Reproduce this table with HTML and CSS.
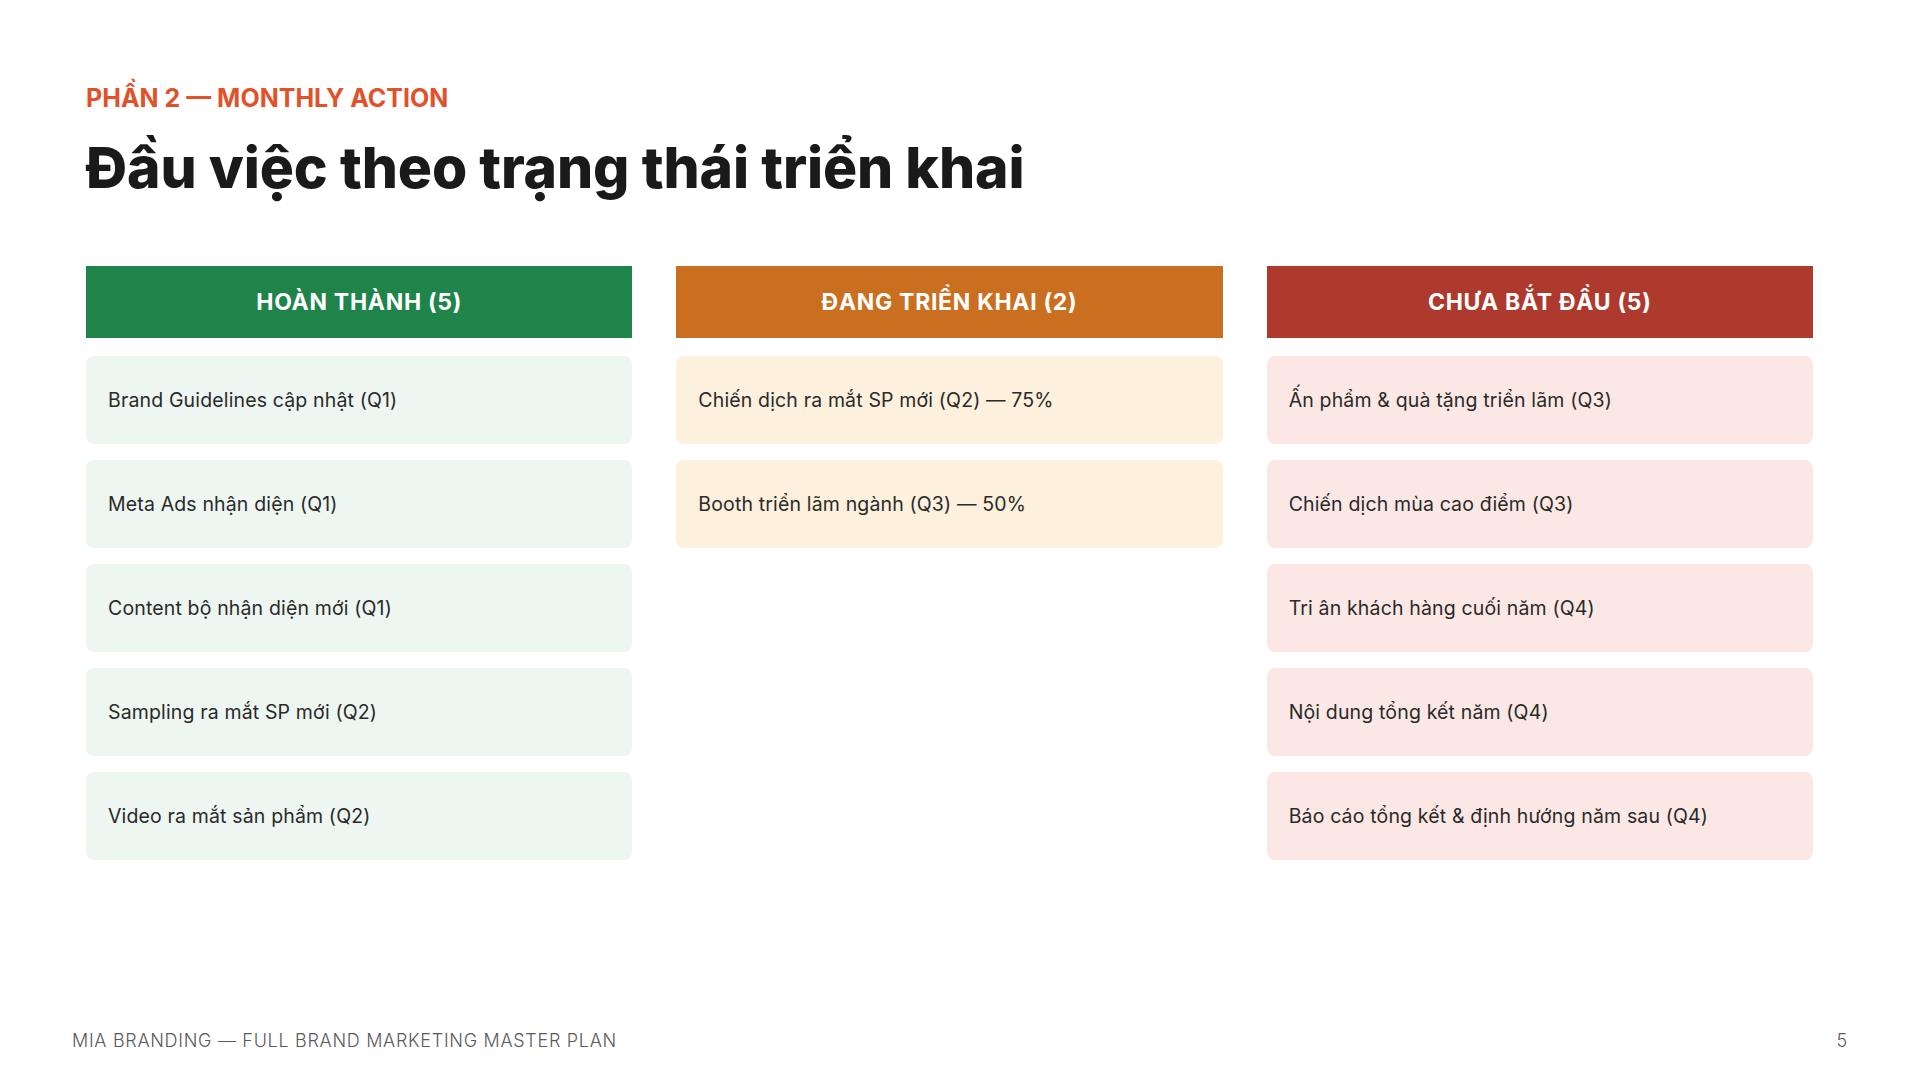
FILE: index.html
```html
<!DOCTYPE html>
<html lang="vi">
<head>
<meta charset="utf-8">
<title>Đầu việc theo trạng thái triển khai</title>
<link rel="stylesheet" href="styles.css">
</head>
<body>
<div class="slide">
  <main class="content">
    <div class="eyebrow">PHẦN 2 — MONTHLY ACTION</div>
    <h1 class="title">Đầu việc theo trạng thái triển khai</h1>
    <div class="board">
      <section class="col col-done">
        <div class="col-head">HOÀN THÀNH (5)</div>
        <div class="card">Brand Guidelines cập nhật (Q1)</div>
        <div class="card">Meta Ads nhận diện (Q1)</div>
        <div class="card">Content bộ nhận diện mới (Q1)</div>
        <div class="card">Sampling ra mắt SP mới (Q2)</div>
        <div class="card">Video ra mắt sản phẩm (Q2)</div>
      </section>
      <section class="col col-doing">
        <div class="col-head">ĐANG TRIỂN KHAI (2)</div>
        <div class="card">Chiến dịch ra mắt SP mới (Q2) — 75%</div>
        <div class="card">Booth triển lãm ngành (Q3) — 50%</div>
      </section>
      <section class="col col-todo">
        <div class="col-head">CHƯA BẮT ĐẦU (5)</div>
        <div class="card">Ấn phẩm &amp; quà tặng triển lãm (Q3)</div>
        <div class="card">Chiến dịch mùa cao điểm (Q3)</div>
        <div class="card">Tri ân khách hàng cuối năm (Q4)</div>
        <div class="card">Nội dung tổng kết năm (Q4)</div>
        <div class="card">Báo cáo tổng kết &amp; định hướng năm sau (Q4)</div>
      </section>
    </div>
  </main>
  <footer class="footer">
    <span class="footer-brand">MIA BRANDING — FULL BRAND MARKETING MASTER PLAN</span>
    <span class="footer-page">5</span>
  </footer>
</div>
</body>
</html>
```

FILE: styles.css
```css
* { box-sizing: border-box; }

html, body {
  margin: 0;
  padding: 0;
  background: #ffffff;
}

body {
  font-family: "Inter", "Open Sans", "Liberation Sans", sans-serif;
  color: #1c1c1c;
}

.slide {
  width: 1920px;
  height: 1080px;
  display: flex;
  flex-direction: column;
  overflow: hidden;
}

.content {
  flex: 1;
  padding: 83px 107px 0 86px;
}

.eyebrow {
  font-size: 25px;
  font-weight: 700;
  line-height: 30px;
  color: #e2522a;
  letter-spacing: 0;
}

.title {
  margin: 21px 0 0 0;
  font-size: 57px;
  line-height: 68px;
  font-weight: 800;
  color: #1a1a1a;
  letter-spacing: -0.15px;
}

.board {
  margin-top: 64px;
  display: grid;
  grid-template-columns: repeat(3, 1fr);
  column-gap: 44px;
  align-items: start;
}

.col {
  display: flex;
  flex-direction: column;
  gap: 16px;
}

.col-head {
  height: 72px;
  display: flex;
  align-items: center;
  justify-content: center;
  color: #ffffff;
  font-size: 23px;
  font-weight: 700;
  letter-spacing: 0.7px;
  margin-bottom: 2px;
}

.card {
  height: 88px;
  display: flex;
  align-items: center;
  padding: 0 22px;
  border-radius: 8px;
  font-size: 19.5px;
  letter-spacing: 0.15px;
  color: #2a2a2a;
}

.col-done .col-head { background: #1f8449; }
.col-done .card { background: #eef6f1; }

.col-doing .col-head { background: #c96f1f; }
.col-doing .card { background: #fdf0dc; }

.col-todo .col-head { background: #ae3a2e; }
.col-todo .card { background: #fbe8e5; }

.footer {
  height: 80px;
  padding: 0 72px 0 72px;
  display: flex;
  justify-content: space-between;
  align-items: center;
  font-size: 18px;
  font-weight: 300;
  color: #5a5a5a;
  letter-spacing: 0.7px;
}
```
